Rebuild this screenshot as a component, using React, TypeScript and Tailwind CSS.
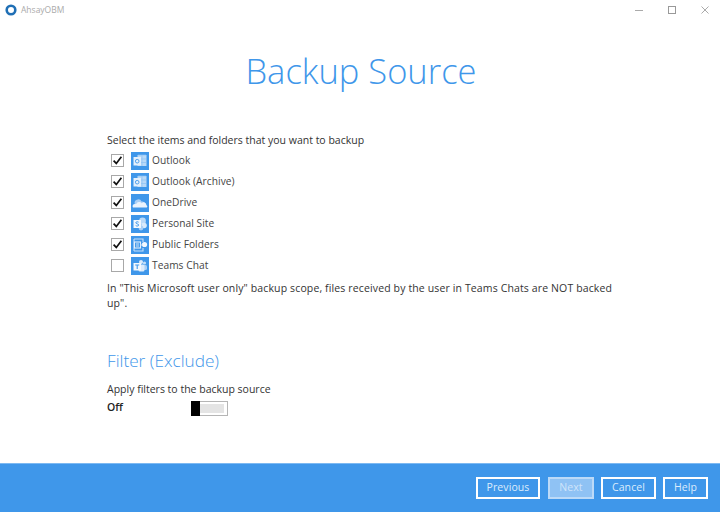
import React from "react";

const F = "font-['Open_Sans','Noto_Sans',sans-serif]";

function Ico({ kind }: { kind: string }) {
  return (
    <svg width="18" height="18" viewBox="0 0 18 18" className="shrink-0">
      <rect width="18" height="18" fill="#3f97ea" />
      {kind === "outlook" && (
        <>
          <rect x="6.5" y="3" width="9" height="11" fill="#b9d9f8" />
          <path d="M7 3h8M11 3v11M7 7h8M7 10.5h8" stroke="#8cc1f3" strokeWidth="0.7" />
          <rect x="2.5" y="5" width="7.5" height="8.5" fill="#e4f0fc" />
          <circle cx="6.2" cy="9.2" r="1.8" fill="none" stroke="#4f9fec" strokeWidth="1" />
        </>
      )}
      {kind === "onedrive" && (
        <>
          <path d="M4 10.5a3.6 3.6 0 0 1 6.6-3 3 3 0 0 1 3.6 2.6L7 11.5z" fill="#a9cff6" />
          <path d="M2 13.5a2.3 2.3 0 0 1 2-3.6h1.2a3.4 3.4 0 0 1 5.6-.6 2.6 2.6 0 0 1 4.6 1.6 1.7 1.7 0 0 1 .4 2.6z" fill="#eaf3fd" />
        </>
      )}
      {kind === "site" && (
        <>
          <circle cx="11.5" cy="6" r="3.4" fill="#b9d9f8" />
          <circle cx="13" cy="10.5" r="2.8" fill="#d9eafb" />
          <circle cx="10" cy="13" r="2.4" fill="#a9d0f7" />
          <rect x="2.5" y="5" width="7.5" height="8" fill="#f2f8fe" />
          <path d="M7.6 7.2c-.7-.6-2.8-.6-2.8.6s2.9.9 2.9 2.2-2.3 1.3-3 .5" fill="none" stroke="#3f97ea" strokeWidth="1" />
        </>
      )}
      {kind === "folders" && (
        <>
          <path d="M3 3h9v3M3 15h9v-3M3 3v12" fill="none" stroke="#c3dff9" strokeWidth="1.1" />
          <rect x="3.5" y="6" width="6" height="6" fill="none" stroke="#e4f0fc" strokeWidth="1.1" />
          <path d="M5 8h3M5 10h3" stroke="#e4f0fc" strokeWidth="0.9" />
          <circle cx="13.5" cy="8.5" r="2.6" fill="#f2f8fe" />
          <path d="M9 9h3" stroke="#d5e7fb" strokeWidth="1" />
        </>
      )}
      {kind === "teams" && (
        <>
          <circle cx="13.5" cy="6" r="1.6" fill="#c3dff9" />
          <rect x="11" y="8" width="5" height="5" rx="1.5" fill="#a9cff6" />
          <circle cx="10" cy="5" r="2" fill="#dcebfb" />
          <rect x="7.5" y="7.5" width="6" height="7" rx="1.5" fill="#dcebfb" />
          <rect x="2.5" y="6" width="7.5" height="7.5" fill="#f2f8fe" />
          <path d="M4.2 8h4M6.2 8v4" stroke="#3f97ea" strokeWidth="1.1" />
        </>
      )}
    </svg>
  );
}

function Row({ label, kind, checked }: { label: string; kind: string; checked: boolean }) {
  return (
    <div className="flex h-[21px] items-center">
      <div className="ml-[4px] flex h-[13px] w-[13px] items-center justify-center border border-[#a8a8a8] bg-white">
        {checked && (
          <svg width="11" height="11" viewBox="0 0 11 11">
            <path d="M1.6 5.6 4.3 8.4 9.4 1.8" fill="none" stroke="#111" strokeWidth="1.7" />
          </svg>
        )}
      </div>
      <div className="ml-[7px]">
        <Ico kind={kind} />
      </div>
      <span className="ml-[3px] text-[10.2px] tracking-[0.05px] text-[#444]">{label}</span>
    </div>
  );
}

function Btn({ w, children, disabled, extra }: { w: string; children: string; disabled?: boolean; extra?: string }) {
  return (
    <div
      className={`flex h-[22px] items-center justify-center border-2 text-[10.5px] font-medium tracking-[0.1px] ${w} ${extra ?? ""} ${
        disabled ? "border-[#bcdaf8] bg-[#8fc2f4] text-[#cfe4fa]" : "border-white text-[#dcecfc]"
      }`}
    >
      {children}
    </div>
  );
}

export default function App() {
  return (
    <div className={`flex h-[512px] w-[720px] flex-col overflow-hidden bg-white ${F}`}>
      <div className="flex h-[20px] items-center">
        <svg width="12" height="12" viewBox="0 0 12 12" className="ml-[5px]">
          <circle cx="6" cy="6" r="4.3" fill="none" stroke="#1f6fb5" strokeWidth="2.6" />
        </svg>
        <span className="ml-[4px] text-[8.5px] text-[#aaa]">AhsayOBM</span>
        <div className="ml-auto flex items-center">
          <svg width="10" height="10" viewBox="0 0 10 10" className="mr-[23px]">
            <path d="M1 5.5h8" stroke="#aaa" />
          </svg>
          <svg width="10" height="10" viewBox="0 0 10 10" className="mr-[23px]">
            <rect x="1.5" y="1.5" width="7" height="7" fill="none" stroke="#999" />
          </svg>
          <svg width="10" height="10" viewBox="0 0 10 10" className="mr-[10px]">
            <path d="M1.5 1.5l7 7M8.5 1.5l-7 7" stroke="#aaa" />
          </svg>
        </div>
      </div>
      <h1 className="mt-[26px] pl-[2px] text-center text-[34.5px] leading-[50px] font-light text-[#3f97ea]">Backup Source</h1>
      <div className="flex flex-1 flex-col pl-[107px] pr-[100px]">
        <p className="mt-[37px] h-[14px] text-[10.5px] leading-[14px] text-[#333]">Select the items and folders that you want to backup</p>
        <div className="mt-[3px] flex flex-col">
          <Row label="Outlook" kind="outlook" checked />
          <Row label="Outlook (Archive)" kind="outlook" checked />
          <Row label="OneDrive" kind="onedrive" checked />
          <Row label="Personal Site" kind="site" checked />
          <Row label="Public Folders" kind="folders" checked />
          <Row label="Teams Chat" kind="teams" checked={false} />
        </div>
        <p className="mt-[5px] text-[10.5px] leading-[15px] tracking-[0.13px] text-[#333]">
          In "This Microsoft user only" backup scope, files received by the user in Teams Chats are NOT backed up".
        </p>
        <h2 className="mt-[39px] text-[17.2px] leading-[22px] font-light text-[#3f97ea]">Filter (Exclude)</h2>
        <p className="mt-[10px] text-[10.5px] leading-[14px] text-[#333]">Apply filters to the backup source</p>
        <div className="mt-[4px] flex h-[16px] items-center">
          <span className="w-[84px] text-[10.5px] font-semibold text-[#222]">Off</span>
          <div className="flex h-[15px] w-[37px] items-center border border-l-0 border-[#b5b5b5] bg-white pr-[3px]">
            <div className="h-[15px] w-[9px] bg-black" />
            <div className="h-[9px] flex-1 bg-[#e4e4e4]" />
          </div>
        </div>
      </div>
      <div className="flex h-[49px] items-center justify-end gap-[7px] border-t border-[#7db9f2] bg-[#3f97ea] pr-[12px]">
        <Btn w="w-[64px]" extra="mr-[1px]">Previous</Btn>
        <Btn w="w-[46px]" disabled>Next</Btn>
        <Btn w="w-[55px]">Cancel</Btn>
        <Btn w="w-[45px]">Help</Btn>
      </div>
    </div>
  );
}
